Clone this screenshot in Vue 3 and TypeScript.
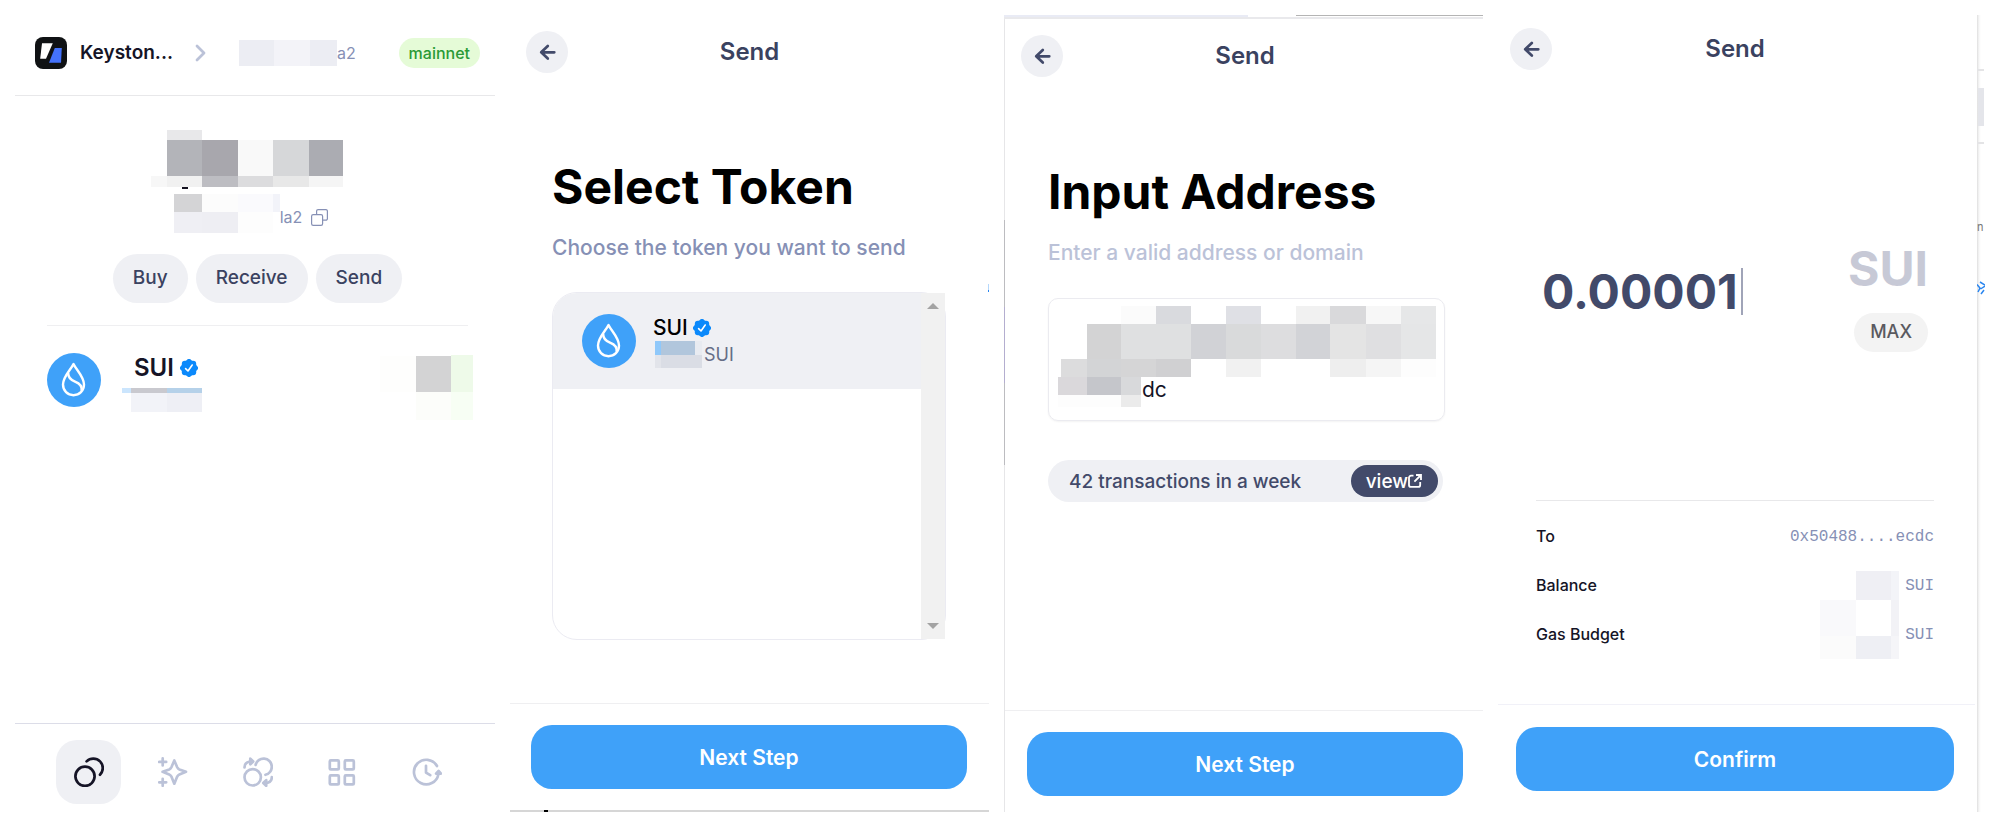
<script setup lang="ts">
import { h, ref } from 'vue'

type Cell = [x: number, y: number, w: number, h: number, fill: string]

// Draws the pixelated cover that hides private values.
const Mosaic = (props: { w: number; h: number; cells: Cell[] }) =>
  h(
    'svg',
    { width: props.w, height: props.h, viewBox: `0 0 ${props.w} ${props.h}`, 'shape-rendering': 'crispEdges', 'aria-hidden': 'true' },
    props.cells.map(([x, y, width, height, fill]) => h('rect', { x, y, width, height, fill })),
  )
Mosaic.props = ['w', 'h', 'cells']

const headerCells: Cell[] = [[0, 0, 35, 26, '#ecedf3'], [35, 0, 36, 26, '#f3f3f8'], [71, 0, 27, 26, '#ecedf3']]
const nameCells: Cell[] = [
  [16, 0, 35, 10, '#e8e8ea'],
  [16, 10, 35, 36, '#b3b4b9'], [51, 10, 36, 36, '#a8a7ad'], [87, 10, 35, 36, '#f9f9f9'], [122, 10, 36, 36, '#d6d7d9'], [158, 10, 34, 36, '#abacb2'],
  [0, 46, 16, 11, '#f7f7f7'], [16, 46, 35, 11, '#f1f1f1'], [51, 46, 36, 11, '#bdbdc2'], [87, 46, 35, 11, '#dcdcde'], [122, 46, 36, 11, '#e8e8e8'], [158, 46, 34, 11, '#f5f5f5'],
  [31, 57, 6, 2, '#141220'],
]
const addressCells: Cell[] = [
  [0, 0, 28, 18, '#d4d4d6'], [28, 0, 36, 18, '#fcfcfc'], [64, 0, 35, 18, '#fafafd'], [99, 0, 7, 18, '#f2f3f9'],
  [0, 18, 28, 21, '#efeff4'], [28, 18, 36, 21, '#eeeef3'], [64, 18, 35, 21, '#fdfdfd'],
]
const holdingCells: Cell[] = [
  [0, 0, 9, 5, '#cbe5fd'], [9, 0, 36, 5, '#c9c9cf'], [45, 0, 35, 5, '#b5d1e9'],
  [9, 5, 36, 19, '#f2f3f8'], [45, 5, 35, 19, '#eeeff5'],
]
const valueCells: Cell[] = [
  [0, 1, 36, 36, '#fefefd'], [36, 1, 35, 36, '#d3d3d4'], [71, 0, 22, 37, '#eefae9'],
  [36, 37, 35, 28, '#fcfdfa'], [71, 37, 22, 28, '#f7fef4'],
]
const tokenCells: Cell[] = [
  [2, 0, 6, 14, '#8fc8fa'], [8, 0, 34, 14, '#b1c6dc'], [42, 0, 7, 14, '#e8ebf1'],
  [2, 14, 6, 13, '#e2e4ea'], [8, 14, 41, 13, '#dadde5'],
]
const recipientCells: Cell[] = [
  [63, 0, 35, 18, '#fbfbfb'], [98, 0, 35, 18, '#d9dade'], [168, 0, 35, 18, '#dfe0e5'], [238, 0, 34, 18, '#f1f1f1'], [272, 0, 36, 18, '#d9d9db'], [308, 0, 35, 18, '#f7f7f7'], [343, 0, 35, 18, '#e6e7e8'],
  [29, 18, 34, 35, '#d3d3d4'], [63, 18, 70, 35, '#dfe0e1'], [133, 18, 35, 35, '#d1d2d6'], [168, 18, 35, 35, '#d9dadb'], [203, 18, 35, 35, '#dddddf'], [238, 18, 34, 35, '#d2d3d7'], [272, 18, 36, 35, '#e4e4e4'], [308, 18, 35, 35, '#dfdfe1'], [343, 18, 35, 35, '#e5e6e7'],
  [3, 53, 26, 18, '#dcdcdd'], [29, 53, 34, 18, '#d3d4d6'], [63, 53, 35, 18, '#d5d5d6'], [98, 53, 35, 18, '#d0d0d2'], [168, 53, 35, 18, '#f1f1f1'], [272, 53, 36, 18, '#eeeeee'], [308, 53, 35, 18, '#f5f5f5'], [343, 53, 35, 18, '#fdfdfd'],
  [0, 71, 29, 18, '#dad8db'], [29, 71, 34, 18, '#c5c6cb'], [63, 71, 20, 18, '#d8d9db'],
  [0, 89, 63, 12, '#fdfdfd'], [63, 89, 20, 12, '#ebebeb'],
]
const detailCells: Cell[] = [
  [36, 0, 35, 29, '#efeff4'], [71, 0, 8, 29, '#f3f4f8'],
  [0, 29, 36, 36, '#f9f9fb'], [71, 29, 8, 36, '#f2f2f6'],
  [0, 65, 36, 23, '#fbfbfb'], [36, 65, 35, 23, '#eeeff4'], [71, 65, 8, 23, '#f5f5f8'],
]

const actions = ['Buy', 'Receive', 'Send']
const details = [
  { label: 'To', value: '0x50488....ecdc' },
  { label: 'Balance', value: 'SUI' },
  { label: 'Gas Budget', value: 'SUI' },
]
const amount = ref('0.00001')
const recipient = ref('dc')
</script>

<template>
  <svg class="sprite" aria-hidden="true">
    <symbol id="sui" viewBox="0 0 54 54">
      <circle cx="27" cy="27" r="27" fill="#3fa1f9" />
      <g fill="none" stroke="#fff" stroke-width="2.4" stroke-linejoin="round">
        <path d="M26.5 11C24 16.5 16 23.5 16 31.6 16 37.8 20.6 42.2 26.5 42.2S37 37.8 37 31.6C37 23.5 29 16.5 26.5 11Z" />
        <path d="M21.2 20C21 25 24 27 28 28.6 32.5 30.3 35.4 32.5 34.6 37.6" />
      </g>
    </symbol>
    <symbol id="verified" viewBox="0 0 18 18">
      <g fill="#0b89fb">
        <rect x="1.8" y="1.8" width="14.4" height="14.4" rx="3" />
        <rect x="1.8" y="1.8" width="14.4" height="14.4" rx="3" transform="rotate(45 9 9)" />
      </g>
      <path d="M5.6 9.6 8 12l4.2-6" fill="none" stroke="#fff" stroke-width="1.6" stroke-linecap="round" stroke-linejoin="round" />
    </symbol>
    <symbol id="back" viewBox="0 0 42 42">
      <path d="M28.3 21.3H15.2M21.8 15 15.2 21.3l6.6 6.3" fill="none" stroke="#424a6a" stroke-width="2.7" stroke-linecap="round" stroke-linejoin="round" />
    </symbol>
  </svg>

  <main class="board">
    <section class="screen home">
      <header class="account-bar">
        <svg class="logo" viewBox="0 0 32 32" aria-hidden="true">
          <rect width="32" height="32" rx="8" fill="#101214" />
          <path d="M7 6.3h10.8L11 21.8H5.2Z" fill="#fff" />
          <path d="M19.8 11h7l-.8 14.7H14Z" fill="#4472fb" />
        </svg>
        <strong class="wallet">Keyston...</strong>
        <svg class="chevron" viewBox="0 0 11 18" aria-hidden="true">
          <path d="M2 2l7 7-7 7" fill="none" stroke="#bbc2d8" stroke-width="2.8" stroke-linecap="round" stroke-linejoin="round" />
        </svg>
        <span class="masked header-address"><Mosaic :w="98" :h="26" :cells="headerCells" /><span>a2</span></span>
        <span class="network">mainnet</span>
      </header>

      <div class="profile">
        <Mosaic class="name" :w="213" :h="59" :cells="nameCells" />
        <div class="masked address">
          <Mosaic :w="106" :h="39" :cells="addressCells" />
          <span>la2</span>
          <button class="copy" type="button" aria-label="Copy address">
            <svg viewBox="0 0 17 17" width="17" height="17" fill="none" stroke="#8690b5" stroke-width="1.2">
              <rect x=".6" y="5.6" width="11" height="10.8" rx="1.6" />
              <path d="M5.6 5.4V2.1A1.5 1.5 0 0 1 7.1.6h7.7a1.5 1.5 0 0 1 1.6 1.5v7.6a1.5 1.5 0 0 1-1.6 1.5h-3" />
            </svg>
          </button>
        </div>
        <div class="actions">
          <button v-for="a in actions" :key="a" type="button">{{ a }}</button>
        </div>
      </div>

      <div class="holding">
        <svg class="coin" aria-hidden="true"><use href="#sui" /></svg>
        <div class="holding-info">
          <div class="holding-name">SUI <svg class="badge" aria-hidden="true"><use href="#verified" /></svg></div>
          <Mosaic :w="80" :h="24" :cells="holdingCells" />
        </div>
        <Mosaic class="holding-value" :w="93" :h="65" :cells="valueCells" />
      </div>

      <nav class="tabs">
        <button class="active" type="button" aria-label="Assets">
          <svg viewBox="0 0 30 30"><circle cx="11" cy="19.3" r="9.6" /><path d="M12.6 4.4A9.3 9.3 0 1 1 26 17.8" /></svg>
        </button>
        <button type="button" aria-label="Collectibles">
          <svg viewBox="0 0 30 30">
            <path d="M16.3 3.5 19.2 10.3Q19.9 11.8 21.4 12.4L28 14.8 21.4 17.4Q19.9 18 19.2 19.6L16.3 26.7 13.4 19.6Q12.7 18 11.2 17.4L4.6 14.8 11.2 12.4Q12.7 11.8 13.4 10.3Z" />
            <path d="M4.7 1.4v7M1.2 4.9h7M4.7 21.8v7M1.2 25.3h7" />
          </svg>
        </button>
        <button type="button" aria-label="Swap">
          <svg viewBox="0 0 30 30">
            <circle cx="9.7" cy="20.3" r="8.2" /><path d="M12.6 7.9A8.2 8.2 0 1 1 22.4 17.8" />
            <path d="M1.5 10.4C1.6 6.6 4 4.5 8.5 4.5M28.8 20.2C28.8 24 26.5 26 22 26" />
            <path d="M7.3 1.6 10.2 4.5 7.3 7.4ZM23.2 23.1 20.3 26 23.2 28.9Z" />
          </svg>
        </button>
        <button type="button" aria-label="Apps">
          <svg viewBox="0 0 30 30">
            <rect x="2.8" y="3.4" width="9" height="9" rx="1" /><rect x="17.8" y="3.4" width="9" height="9" rx="1" />
            <rect x="2.8" y="18.4" width="9" height="9" rx="1" /><rect x="17.8" y="18.4" width="9" height="9" rx="1" />
          </svg>
        </button>
        <button type="button" aria-label="History">
          <svg viewBox="0 0 30 30">
            <path d="M25 9A12.3 12.3 0 1 0 26.4 17.2M14 8.8v6.8l4.2 2.6" /><path d="M26.6 14 29 16.6H24Z" />
          </svg>
        </button>
      </nav>
    </section>

    <section class="screen select">
      <header class="topbar">
        <button class="back" type="button" aria-label="Back"><svg><use href="#back" /></svg></button>
        <h2>Send</h2>
      </header>
      <div class="content">
        <h1>Select Token</h1>
        <p class="hint">Choose the token you want to send</p>
        <div class="token-list">
          <button class="token" type="button">
            <svg class="coin" aria-hidden="true"><use href="#sui" /></svg>
            <span class="token-info">
              <span class="token-name">SUI <svg class="badge" aria-hidden="true"><use href="#verified" /></svg></span>
              <span class="masked token-balance"><Mosaic :w="49" :h="27" :cells="tokenCells" /><span>SUI</span></span>
            </span>
          </button>
          <div class="scroll-track" aria-hidden="true">
            <svg viewBox="0 0 12 6" width="12" height="6"><path d="M0 6 6 0l6 6Z" fill="#a3a3a3" /></svg>
            <svg viewBox="0 0 12 6" width="12" height="6"><path d="M0 0 6 6l6-6Z" fill="#a3a3a3" /></svg>
          </div>
        </div>
      </div>
      <footer><button class="primary" type="button">Next Step</button></footer>
      <i class="speck" aria-hidden="true"></i>
      <i class="edge-mark" aria-hidden="true"></i>
    </section>

    <section class="screen recipient">
      <div class="window-top" aria-hidden="true"><i></i><i></i></div>
      <header class="topbar">
        <button class="back" type="button" aria-label="Back"><svg><use href="#back" /></svg></button>
        <h2>Send</h2>
      </header>
      <div class="content">
        <h1>Input Address</h1>
        <label class="hint" for="recipient">Enter a valid address or domain</label>
        <div class="address-box">
          <textarea id="recipient" v-model="recipient" spellcheck="false"></textarea>
          <Mosaic class="cover" :w="378" :h="101" :cells="recipientCells" />
        </div>
        <div class="activity">
          <span>42 transactions in a week</span>
          <a href="#activity">view<svg viewBox="0 0 14 14" width="14" height="14" fill="none" stroke="#fff" stroke-width="1.8" aria-hidden="true">
            <path d="M5.5 1.7H3A2 2 0 0 0 1 3.7v7.2a2 2 0 0 0 2 2h7.2a2 2 0 0 0 2-2V8" /><path d="M8 1h5v5M13 1 6.4 7.6" />
          </svg></a>
        </div>
      </div>
      <footer><button class="primary" type="button">Next Step</button></footer>
    </section>

    <section class="screen confirm">
      <header class="topbar">
        <button class="back" type="button" aria-label="Back"><svg><use href="#back" /></svg></button>
        <h2>Send</h2>
      </header>
      <div class="amount">
        <div class="amount-entry">
          <input v-model="amount" aria-label="Amount" inputmode="decimal" />
          <i class="caret" aria-hidden="true"></i>
        </div>
        <div class="unit">
          <span>SUI</span>
          <button type="button">MAX</button>
        </div>
      </div>
      <dl class="details">
        <div v-for="d in details" :key="d.label"><dt>{{ d.label }}</dt><dd>{{ d.value }}</dd></div>
        <Mosaic class="cover" :w="79" :h="88" :cells="detailCells" />
      </dl>
      <footer><button class="primary" type="button">Confirm</button></footer>
      <div class="behind" aria-hidden="true">
        <i class="rule"></i><i class="block"></i><i class="rule"></i>
        <span>n</span>
        <svg viewBox="0 0 8 14" width="8" height="14"><path d="M0 3.5 3 7 1 11M3 1l5 3M3.5 8 8 5M4 13l3-4" fill="none" stroke="#2a86f0" stroke-width="1.5" /></svg>
      </div>
    </section>
  </main>
</template>

<style>
body {
  margin: 0;
  background: #fff;
}
</style>

<style scoped>
* {
  box-sizing: border-box;
}
.sprite {
  position: absolute;
  width: 0;
  height: 0;
}
.board {
  display: grid;
  grid-template-columns: 480fr 479fr 479fr 486fr;
  gap: 15px;
  min-height: 100vh;
  padding: 15px;
  font-family: Inter, "Liberation Sans", sans-serif;
  color: #151426;
}
button,
input,
textarea {
  font: inherit;
  color: inherit;
  border: 0;
  margin: 0;
  padding: 0;
  background: none;
}
svg {
  display: block;
  flex: none;
}
.screen {
  position: relative;
  display: flex;
  flex-direction: column;
  min-width: 0;
}
.masked {
  display: flex;
  align-items: center;
  font-size: 16px;
  color: #8690b5;
}

/* Home */
.account-bar {
  display: flex;
  align-items: center;
  height: 81px;
  padding: 0 15px 4px 20px;
  border-bottom: 1px solid #e8e8ea;
}
.logo {
  width: 32px;
  height: 32px;
}
.wallet {
  margin: 0 22px 0 13px;
  font-size: 19px;
  font-weight: 600;
  line-height: 24px;
}
.chevron {
  width: 11px;
  height: 18px;
}
.header-address {
  margin-left: 33px;
}
.network {
  margin-left: auto;
  padding: 0 10px;
  border-radius: 15px;
  background: #e5fbd7;
  color: #2a9a36;
  font-size: 16px;
  font-weight: 500;
  line-height: 30px;
}
.profile {
  display: flex;
  flex-direction: column;
  align-items: center;
  margin: 0 27px 0 32px;
  padding: 34px 0 22px;
  border-bottom: 1px solid #efeff1;
}
.address {
  margin-top: 5px;
  padding-right: 13px;
}
.address span {
  margin-top: 7px;
}
.copy {
  margin: 8px 0 0 9px;
}
.actions {
  display: flex;
  gap: 8px;
  margin-top: 21px;
}
.actions button {
  height: 49px;
  padding: 0 20px 2px;
  border-radius: 25px;
  background: #eff0f4;
  color: #3a4260;
  font-size: 19px;
  font-weight: 500;
}
.coin {
  width: 54px;
  height: 54px;
}
.badge {
  width: 18px;
  height: 18px;
}
.holding {
  display: flex;
  align-items: flex-start;
  padding: 27px 22px 0 32px;
}
.holding-info {
  margin-left: 21px;
}
.holding-name {
  display: flex;
  align-items: center;
  gap: 6px;
  padding-left: 12px;
  margin-bottom: 5px;
  font-size: 24px;
  font-weight: 600;
  line-height: 30px;
}
.holding-value {
  margin: 2px 0 0 auto;
}
.tabs {
  display: flex;
  justify-content: space-between;
  margin-top: auto;
  padding: 16px 36px 8px 41px;
  border-top: 1px solid #dcdde8;
}
.tabs button {
  display: grid;
  place-items: center;
  width: 65px;
  height: 64px;
  border-radius: 21px;
}
.tabs .active {
  background: #eff0f4;
}
.tabs svg {
  width: 30px;
  height: 30px;
  fill: none;
  stroke: #bbc2d8;
  stroke-width: 2.7;
  stroke-linecap: round;
  stroke-linejoin: round;
}
.tabs .active svg {
  stroke: #151426;
}

/* Shared by the send screens */
.topbar {
  display: grid;
  grid-template-columns: 42px 1fr 42px;
  align-items: center;
  padding: 16px;
}
.back {
  width: 42px;
  height: 42px;
  border-radius: 50%;
  background: #eff0f4;
}
.back svg {
  width: 42px;
  height: 42px;
}
h2 {
  margin: 0;
  color: #3a4260;
  font-size: 24px;
  font-weight: 600;
  line-height: 30px;
  text-align: center;
}
.content {
  padding: 69px 43px 0 42px;
}
h1 {
  margin: 0 0 19px;
  color: #000;
  font-size: 48px;
  font-weight: 700;
  line-height: 58px;
  white-space: nowrap;
}
.hint {
  display: block;
  margin: 0 0 31px;
  color: #8690b5;
  font-size: 21px;
  font-weight: 500;
  line-height: 26px;
}
footer {
  margin-top: auto;
  padding: 21px 22px 23px 21px;
  border-top: 1px solid #efeff1;
}
.primary {
  display: block;
  width: 100%;
  height: 64px;
  border-radius: 21px;
  background: #3fa1f9;
  color: #fff;
  font-size: 21px;
  font-weight: 600;
}
.cover {
  position: absolute;
}

/* Select token */
.token-list {
  display: flex;
  height: 348px;
  border: 1px solid #ebebf2;
  border-radius: 25px;
}
.token {
  display: flex;
  flex: 1;
  align-items: flex-start;
  align-self: flex-start;
  height: 96px;
  padding: 21px 0 0 29px;
  border-radius: 24px 0 0 0;
  background: #eff0f4;
  text-align: left;
}
.token-info {
  margin: 1px 0 0 17px;
}
.token-name {
  display: flex;
  align-items: center;
  gap: 5px;
  color: #000;
  font-size: 21px;
  font-weight: 500;
  line-height: 26px;
}
.token-balance {
  gap: 2px;
  color: #666d86;
  font-size: 18px;
}
.scroll-track {
  display: flex;
  flex-direction: column;
  align-items: center;
  justify-content: space-between;
  width: 24px;
  padding: 10px 0;
  background: #f1f1f1;
}
.select {
  border-bottom: 2px solid #d6d6d6;
}
.select footer {
  padding-bottom: 21px;
}
.speck {
  position: absolute;
  left: 34px;
  bottom: -2px;
  width: 4px;
  height: 2px;
  background: #000;
}
.edge-mark {
  position: absolute;
  top: 269px;
  right: 0;
  width: 1px;
  height: 8px;
  background: linear-gradient(#b5d8fc 80%, #2a86f0 80%);
}

/* Input address */
.recipient {
  padding: 4px 0 0 1px;
  background: linear-gradient(#e6e6e8 205px, #bcbcc0 205px 292px, #b4aed0 292px 368px, #bcbcc0 368px 450px, #e6e6e8 450px) left / 1px 100% no-repeat;
}
.window-top {
  position: absolute;
  inset: 0 0 auto;
  display: flex;
  justify-content: space-between;
  height: 4px;
  border-bottom: 2px solid #e9e9ec;
}
.window-top i {
  width: 51%;
  background: #e9ebf5;
}
.window-top i + i {
  width: 39%;
  height: 1px;
  background: #b4b4b4;
}
.recipient .topbar {
  padding-right: 14px;
}
.recipient .content {
  padding: 70px 38px 0 43px;
}
.recipient .hint {
  margin-bottom: 32px;
  color: #bbc2d8;
}
.recipient footer {
  padding: 21px 20px 16px 22px;
}
.address-box {
  position: relative;
  height: 123px;
  border: 1px solid #ebebf0;
  border-radius: 10px;
  box-shadow: 0 1px 2px #0000000d;
}
.address-box textarea {
  display: block;
  width: 100%;
  height: 100%;
  padding: 78px 16px 0 93px;
  outline: 0;
  resize: none;
  overflow: hidden;
  font-size: 21px;
  line-height: 26px;
}
.address-box .cover {
  top: 7px;
  left: 9px;
}
.activity {
  display: flex;
  align-items: center;
  justify-content: space-between;
  height: 42px;
  margin: 39px 2px 0 0;
  padding: 0 5px 0 21px;
  border-radius: 21px;
  background: #eff0f4;
  color: #424a6a;
  font-size: 19px;
  font-weight: 500;
}
.activity a {
  display: flex;
  align-items: center;
  height: 32px;
  padding: 0 16px 0 15px;
  border-radius: 16px;
  background: #424a6a;
  color: #fff;
  text-decoration: none;
}

/* Confirm */
.confirm {
  padding-right: 9px;
}
.confirm .topbar {
  padding: 13px 15px 16px 12px;
}
.amount {
  display: flex;
  justify-content: space-between;
  padding: 154px 47px 0 44px;
  color: #424a6a;
  font-size: 48px;
  font-weight: 700;
}
.amount-entry {
  display: flex;
  align-items: center;
  height: 58px;
  margin-top: 22px;
}
.amount-entry input {
  width: 199px;
  outline: 0;
}
.caret {
  width: 2px;
  height: 47px;
  background: #a0a4b8;
}
.unit {
  display: flex;
  flex-direction: column;
  align-items: flex-end;
  gap: 15px;
  color: #c7c9d6;
  line-height: 58px;
}
.unit button {
  height: 39px;
  padding: 0 16px 2px;
  border-radius: 20px;
  background: #f3f3f3;
  color: #5a5a60;
  font-size: 18px;
  font-weight: 500;
  line-height: 37px;
}
.details {
  position: relative;
  margin: auto 41px 57px 38px;
  border-top: 1px solid #e8e8ea;
  padding-top: 23px;
}
.details div {
  display: flex;
  justify-content: space-between;
  font-size: 16px;
  line-height: 24px;
}
.details div + div {
  margin-top: 24px;
}
dt {
  font-weight: 500;
}
dd {
  margin: 0;
  padding-top: 1px;
  color: #8690b5;
  font-family: "Liberation Mono", monospace;
}
.details .cover {
  top: 70px;
  right: 35px;
}
.confirm footer {
  margin-top: 0;
  padding: 22px 21px 21px 18px;
  border-top-color: #f1f1f8;
}
.behind {
  position: absolute;
  inset: 0 0 0 auto;
  display: flex;
  flex-direction: column;
  width: 7px;
  padding-top: 54px;
  background: linear-gradient(90deg, #dedede, #f7f7f7 2px, #fff 4px);
  color: #777;
  font-size: 11px;
  line-height: 20px;
}
.rule {
  height: 2px;
  background: #e4e4e6;
}
.block {
  height: 38px;
  margin: 17px 0 16px 1px;
  background: #e4e5ea;
}
.behind span {
  margin-top: 73px;
}
.behind svg {
  margin-top: 44px;
}
</style>
